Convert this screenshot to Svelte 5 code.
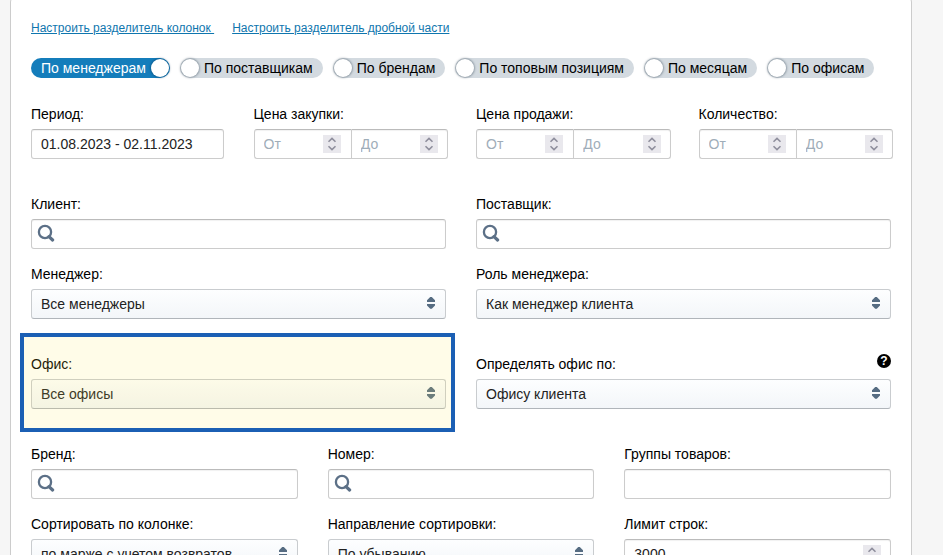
<script lang="ts">
	const groupings = [
		{ value: "managers", name: "По менеджерам" },
		{ value: "suppliers", name: "По поставщикам" },
		{ value: "brands", name: "По брендам" },
		{ value: "top", name: "По топовым позициям" },
		{ value: "months", name: "По месяцам" },
		{ value: "offices", name: "По офисам" },
	];

	const ranges = [
		{ id: "purchase", name: "Цена закупки:" },
		{ id: "sale", name: "Цена продажи:" },
		{ id: "quantity", name: "Количество:" },
	] as const;

	let grouping = $state("managers");
	let form = $state({
		period: "01.08.2023 - 02.11.2023",
		client: "",
		supplier: "",
		manager: "Все менеджеры",
		role: "Как менеджер клиента",
		office: "Все офисы",
		officeBy: "Офису клиента",
		brand: "",
		number: "",
		groups: "",
		sortBy: "по марже с учетом возвратов",
		sortDir: "По убыванию",
	});
	let numbers: Record<string, number | null> = $state({
		purchaseFrom: null,
		purchaseTo: null,
		saleFrom: null,
		saleTo: null,
		quantityFrom: null,
		quantityTo: null,
		limit: 3000,
	});

	function step(key: string, delta: number) {
		numbers[key] = Math.max(0, (numbers[key] ?? 0) + delta);
	}
</script>

{#snippet numberBox(key: string, label: string, placeholder: string)}
	<div class="control number">
		<input id={key} type="number" min="0" aria-label={label || undefined} {placeholder} bind:value={numbers[key]} />
		<div class="stepper">
			<button type="button" tabindex="-1" aria-label="Больше" onclick={() => step(key, 1)}>
				<svg width="18" height="9" viewBox="0 0 18 9"><path d="M5.5 6.8 9 3.4l3.5 3.4" /></svg>
			</button>
			<button type="button" tabindex="-1" aria-label="Меньше" onclick={() => step(key, -1)}>
				<svg width="18" height="9" viewBox="0 0 18 9"><path d="M5.5 2.2 9 5.6l3.5-3.4" /></svg>
			</button>
		</div>
	</div>
{/snippet}

{#snippet searchBox(key: "client" | "supplier" | "brand" | "number", label: string)}
	<div class="field">
		<label for={key}>{label}</label>
		<div class="control search">
			<svg width="18" height="18" viewBox="0 0 18 18" aria-hidden="true">
				<circle cx="8" cy="8" r="6.1" />
				<path d="M12 12.6 15.6 16" class="handle" />
			</svg>
			<input id={key} type="text" bind:value={form[key]} />
		</div>
	</div>
{/snippet}

{#snippet selectBox(key: "manager" | "role" | "office" | "officeBy" | "sortBy" | "sortDir", options: string[])}
	<div class="select">
		<select id={key} bind:value={form[key]}>
			{#each options as opt}
				<option>{opt}</option>
			{/each}
		</select>
		<svg width="10" height="14" viewBox="0 0 10 14" aria-hidden="true">
			<path d="M4.2 1h1.6L9 4.3V6H1V4.3zM1 8h8v1.5L5.8 12.8H4.2L1 9.5z" />
		</svg>
	</div>
{/snippet}

<div class="page">
	<form class="panel" onsubmit={(e) => e.preventDefault()}>
		<div class="links">
			<a href="#columns">{"Настроить разделитель колонок "}</a>
			<a href="#decimals">Настроить разделитель дробной части</a>
		</div>

		<div class="toggles" role="radiogroup" aria-label="Группировка">
			{#each groupings as item}
				<label class="toggle" class:active={grouping === item.value}>
					<input type="radio" name="grouping" value={item.value} bind:group={grouping} />
					<span>{item.name}</span>
				</label>
			{/each}
		</div>

		<div class="row cols-4 spaced">
			<div class="field">
				<label for="period">Период:</label>
				<div class="control">
					<input id="period" type="text" bind:value={form.period} />
				</div>
			</div>
			{#each ranges as range}
				<div class="field">
					<label for="{range.id}From">{range.name}</label>
					<div class="pair">
						{@render numberBox(range.id + "From", range.name + " от", "От")}
						{@render numberBox(range.id + "To", range.name + " до", "До")}
					</div>
				</div>
			{/each}
		</div>

		<div class="row cols-2">
			{@render searchBox("client", "Клиент:")}
			{@render searchBox("supplier", "Поставщик:")}
		</div>

		<div class="row cols-2 spaced">
			<div class="field">
				<label for="manager">Менеджер:</label>
				{@render selectBox("manager", ["Все менеджеры"])}
			</div>
			<div class="field">
				<label for="role">Роль менеджера:</label>
				{@render selectBox("role", ["Как менеджер клиента"])}
			</div>
		</div>

		<div class="row cols-2 spaced">
			<div class="field highlight">
				<label for="office">Офис:</label>
				{@render selectBox("office", ["Все офисы"])}
			</div>
			<div class="field">
				<div class="field-head">
					<label for="officeBy">Определять офис по:</label>
					<button type="button" class="help">?</button>
				</div>
				{@render selectBox("officeBy", ["Офису клиента"])}
			</div>
		</div>

		<div class="row cols-3">
			{@render searchBox("brand", "Бренд:")}
			{@render searchBox("number", "Номер:")}
			<div class="field">
				<label for="groups">Группы товаров:</label>
				<div class="control">
					<input id="groups" type="text" bind:value={form.groups} />
				</div>
			</div>
		</div>

		<div class="row cols-3">
			<div class="field">
				<label for="sortBy">Сортировать по колонке:</label>
				{@render selectBox("sortBy", ["по марже с учетом возвратов"])}
			</div>
			<div class="field">
				<label for="sortDir">Направление сортировки:</label>
				{@render selectBox("sortDir", ["По убыванию", "По возрастанию"])}
			</div>
			<div class="field">
				<label for="limit">Лимит строк:</label>
				{@render numberBox("limit", "", "")}
			</div>
		</div>
	</form>
</div>

<style>
	:global(body) {
		background: #f6f6f6;
	}
	.page {
		height: 100vh;
		overflow-y: auto;
		scrollbar-width: none;
		font: 14px/20px "Liberation Sans", Arial, sans-serif;
		color: #000;
	}
	.page, .page * { box-sizing: border-box; }
	.panel {
		margin: -4px 31px 0 10px;
		padding: 21px 20px 20px;
		background: #fff;
		border: 1px solid #ccc;
		border-radius: 6px;
	}

	.links {
		display: flex;
		gap: 18px;
		font-size: 12px;
		margin-bottom: 20px;
	}
	.links a {
		color: #0f76ae;
		white-space: pre;
	}

	.toggles {
		display: flex;
		flex-wrap: wrap;
		gap: 10px;
		margin-bottom: 26px;
	}
	.toggle {
		display: flex;
		align-items: center;
		gap: 5px;
		height: 20px;
		padding: 0 10px 0 1px;
		border-radius: 10px;
		background: #d3dae0;
		cursor: pointer;
		white-space: nowrap;
	}
	.toggle input {
		appearance: none;
		width: 18px;
		height: 18px;
		margin: 0;
		border-radius: 50%;
		background: #fff;
		box-shadow: 0 0 2px 1px rgba(80, 95, 110, 0.5);
		cursor: pointer;
	}
	.toggle.active {
		flex-direction: row-reverse;
		padding: 0 1px 0 10px;
		background: #147dbb;
		color: #fff;
	}
	.toggle.active input { box-shadow: 0 0 2px 1px rgba(0, 50, 90, 0.4); }

	.row {
		display: grid;
		column-gap: 30px;
		margin-bottom: 15px;
	}
	.row.spaced { margin-bottom: 35px; }
	.cols-2 { grid-template-columns: repeat(2, minmax(0, 1fr)); }
	.cols-3 { grid-template-columns: repeat(3, minmax(0, 1fr)); }
	.cols-4 { grid-template-columns: repeat(4, minmax(0, 1fr)); }
	.field {
		display: flex;
		flex-direction: column;
		gap: 5px;
	}
	.field-head {
		display: flex;
		justify-content: space-between;
		align-items: flex-start;
	}

	.control {
		display: flex;
		align-items: center;
		height: 30px;
		border: 1px solid #ccc;
		border-top-color: #bbb;
		border-radius: 3px;
		background: #fff;
		box-shadow: inset 0 1px 1px rgba(0, 0, 0, 0.06);
	}
	.control input {
		flex: 1;
		min-width: 0;
		width: 100%;
		height: 100%;
		padding: 0 9px;
		border: none;
		outline: none;
		background: transparent;
		font: inherit;
		color: #222;
	}
	.control input::placeholder {
		color: #9fadb9;
		opacity: 1;
	}
	.control:focus-within { border-color: #147dbb; }

	.number { padding-right: 9px; }
	.number input { appearance: textfield; }
	.number input::-webkit-inner-spin-button {
		appearance: none;
		margin: 0;
	}
	.stepper {
		display: flex;
		flex-direction: column;
		background: #e9e8ed;
	}
	.stepper button {
		display: block;
		width: 18px;
		height: 9px;
		padding: 0;
		border: none;
		background: none;
	}
	.stepper svg {
		display: block;
		fill: none;
		stroke: #8f8f9d;
		stroke-width: 1.6;
	}
	.pair {
		display: grid;
		grid-template-columns: 1fr 1fr;
		margin-right: -2px;
	}
	.pair .control:first-child {
		padding-right: 10px;
		border-right: none;
		border-radius: 3px 0 0 3px;
	}
	.pair .control:last-child { border-radius: 0 3px 3px 0; }

	.search { padding-left: 5px; }
	.search svg {
		flex: none;
		margin-bottom: 2px;
		fill: none;
		stroke: #5c7087;
		stroke-width: 2.3;
	}
	.search .handle {
		stroke-width: 3.2;
		stroke-linecap: round;
	}

	.select { position: relative; }
	.select select {
		display: block;
		appearance: none;
		width: 100%;
		height: 30px;
		padding: 0 30px 0 9px;
		border: 1px solid #c9cccf;
		border-bottom-color: #b0b5ba;
		border-radius: 3px;
		outline: none;
		background: linear-gradient(#fdfeff, #f3f6f9);
		font: inherit;
		color: #222;
	}
	.select svg {
		position: absolute;
		right: 10px;
		top: 7px;
		fill: #566c82;
		pointer-events: none;
	}

	.highlight { position: relative; }
	.highlight::after {
		content: "";
		position: absolute;
		inset: -21px -9px -23px -11px;
		border: 4px solid #1b5fb4;
		background: rgba(255, 235, 80, 0.13);
		pointer-events: none;
	}

	.help {
		width: 14px;
		height: 14px;
		padding: 0;
		border: none;
		border-radius: 50%;
		background: #000;
		color: #fff;
		font: bold 12px/14px "Liberation Sans", Arial, sans-serif;
		text-align: center;
		cursor: help;
	}
</style>
